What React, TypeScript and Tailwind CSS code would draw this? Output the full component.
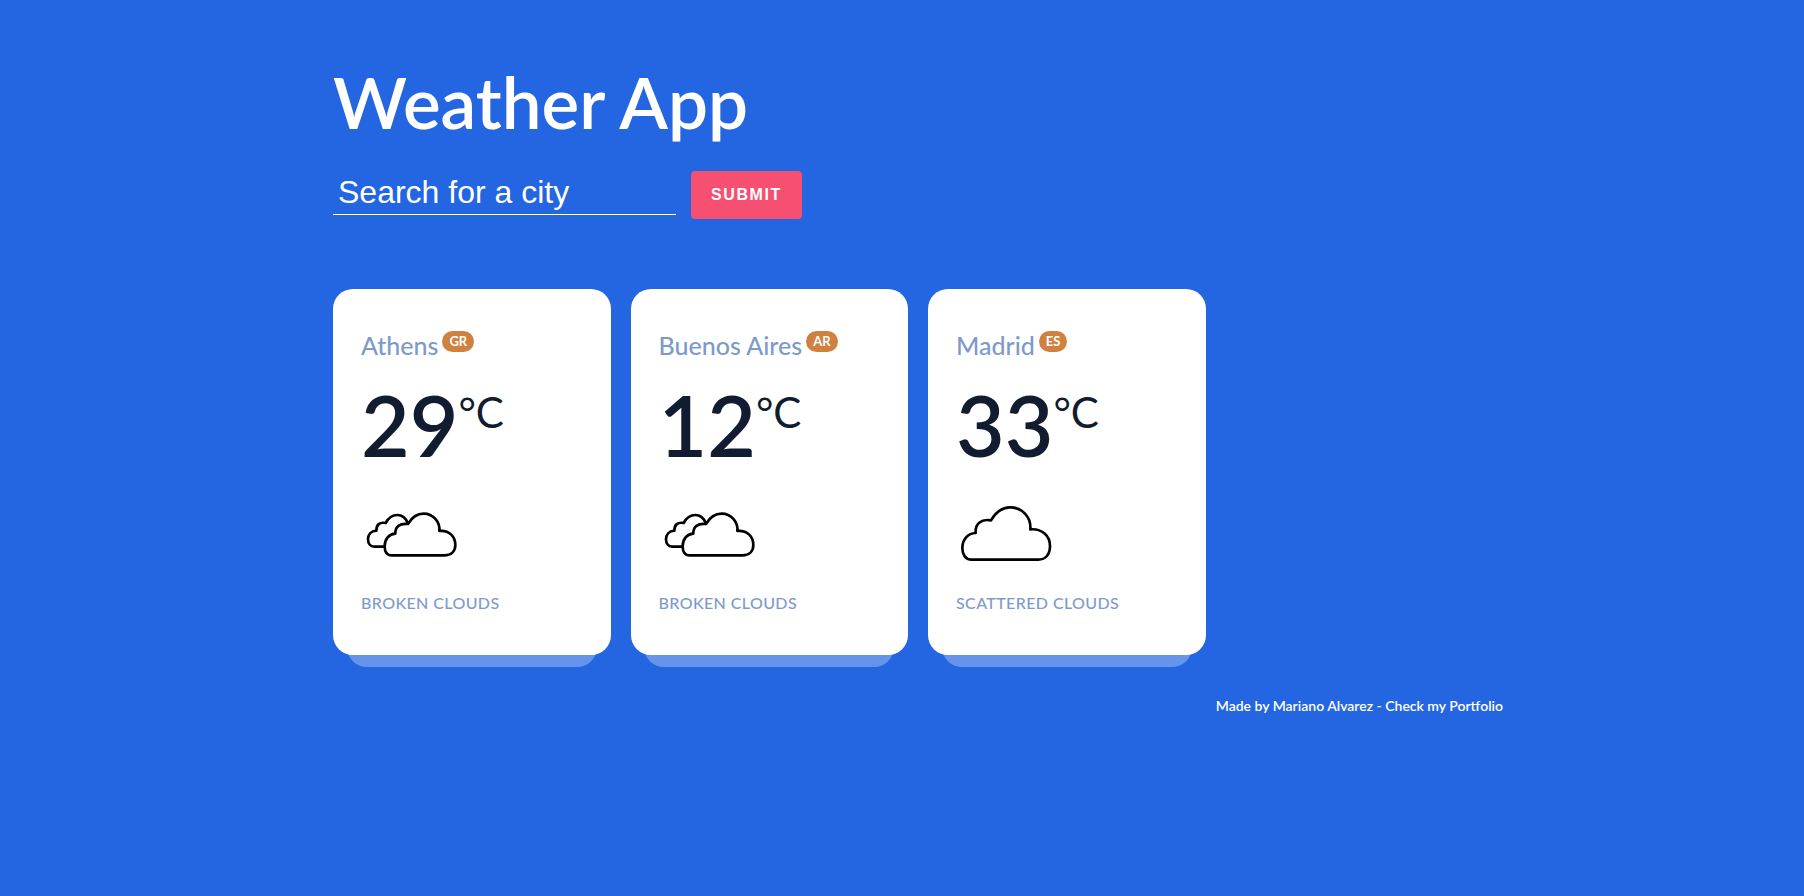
import { FormEvent, useState } from "react";

type Sky = "broken" | "scattered";

interface City {
  name: string;
  country: string;
  temp: number;
  sky: Sky;
  description: string;
}

const cities: City[] = [
  { name: "Athens", country: "GR", temp: 29, sky: "broken", description: "Broken clouds" },
  { name: "Buenos Aires", country: "AR", temp: 12, sky: "broken", description: "Broken clouds" },
  { name: "Madrid", country: "ES", temp: 33, sky: "scattered", description: "Scattered clouds" },
];

function SkyIcon({ sky, label }: { sky: Sky; label: string }) {
  return (
    <svg
      role="img"
      aria-label={label}
      viewBox="0 0 300 300"
      className="size-[100px]"
      fill="none"
      stroke="#000"
      strokeWidth="8"
      strokeLinejoin="round"
    >
      {sky === "broken" ? (
        <>
          <path d="M70 188H40C28 188 21 178 21 166C21 152 30 141 46 140C46 121 56 114 74 117C82 102 94 93 109 93C123 93 134 101 141 118" />
          <path d="M92 214C78 214 71 203 71 188C71 165 84 150 103 149C102 128 116 117 141 120C152 101 169 89 188 89C216 89 238 113 235 141C264 138 283 157 283 183C283 202 270 214 250 214Z" />
        </>
      ) : (
        <path d="M46 227C29 227 19 212 19 193C19 166 36 148 59 147C57 118 76 104 105 109C119 85 140 70 163 70C199 70 226 101 223 136C259 133 282 156 282 187C282 211 269 227 247 227Z" />
      )}
    </svg>
  );
}

function CityCard({ city }: { city: City }) {
  return (
    <li className="relative rounded-[20px] bg-white px-7 pt-10 pb-10 text-[#7d9aca] after:absolute after:inset-x-[5%] after:-bottom-3 after:-z-10 after:h-12 after:rounded-[20px] after:bg-white/30 after:content-['']">
      <h2 className="flex items-start gap-1 text-[25px] leading-8 font-medium">
        <span>{city.name}</span>
        <span className="mt-[2px] rounded-full bg-[#d0813f] px-[7px] text-[13px] leading-[21px] font-bold text-white">
          {city.country}
        </span>
      </h2>
      <p className="mt-3 flex items-start text-[84px] leading-[104px] font-semibold text-[#111c30]">
        {city.temp}
        <span className="text-[42px] leading-[78px] font-normal">°C</span>
      </p>
      <div className="mt-[7px]">
        <SkyIcon sky={city.sky} label={city.description} />
      </div>
      <p className="mt-[7px] text-base leading-6 font-medium tracking-[0.4px] uppercase">{city.description}</p>
    </li>
  );
}

export default function App() {
  const [query, setQuery] = useState("");
  const submit = (event: FormEvent) => {
    event.preventDefault();
    setQuery("");
  };

  return (
    <div className="min-h-screen bg-[#2466e1] font-['Lato',sans-serif] text-white">
      <div className="isolate mx-auto max-w-[1202px] pt-[57px] pl-8">
        <header>
          <h1 className="text-[71px] leading-[90px] font-semibold">Weather App</h1>
          <form onSubmit={submit} className="mt-6 flex items-start gap-[15px]">
            <input
              type="text"
              aria-label="Search for a city"
              placeholder="Search for a city"
              value={query}
              onChange={(event) => setQuery(event.target.value)}
              className="h-11 w-[343px] border-b border-white bg-transparent px-[5px] pb-[2px] font-['Liberation_Sans',sans-serif] text-[32px] outline-none placeholder:text-white placeholder:opacity-100"
            />
            <button
              type="submit"
              className="h-12 rounded-[4px] bg-[#f64f71] px-5 font-['Liberation_Sans',sans-serif] text-base font-bold tracking-[1.6px] uppercase"
            >
              Submit
            </button>
          </form>
        </header>
        <ul className="mt-[70px] grid grid-cols-4 gap-5">
          {cities.map((city) => (
            <CityCard key={city.name} city={city} />
          ))}
        </ul>
        <footer className="mt-[39px] pb-10 text-right text-sm leading-6 font-semibold">
          Made by Mariano Alvarez - <a href="#portfolio">Check my Portfolio</a>
        </footer>
      </div>
    </div>
  );
}
